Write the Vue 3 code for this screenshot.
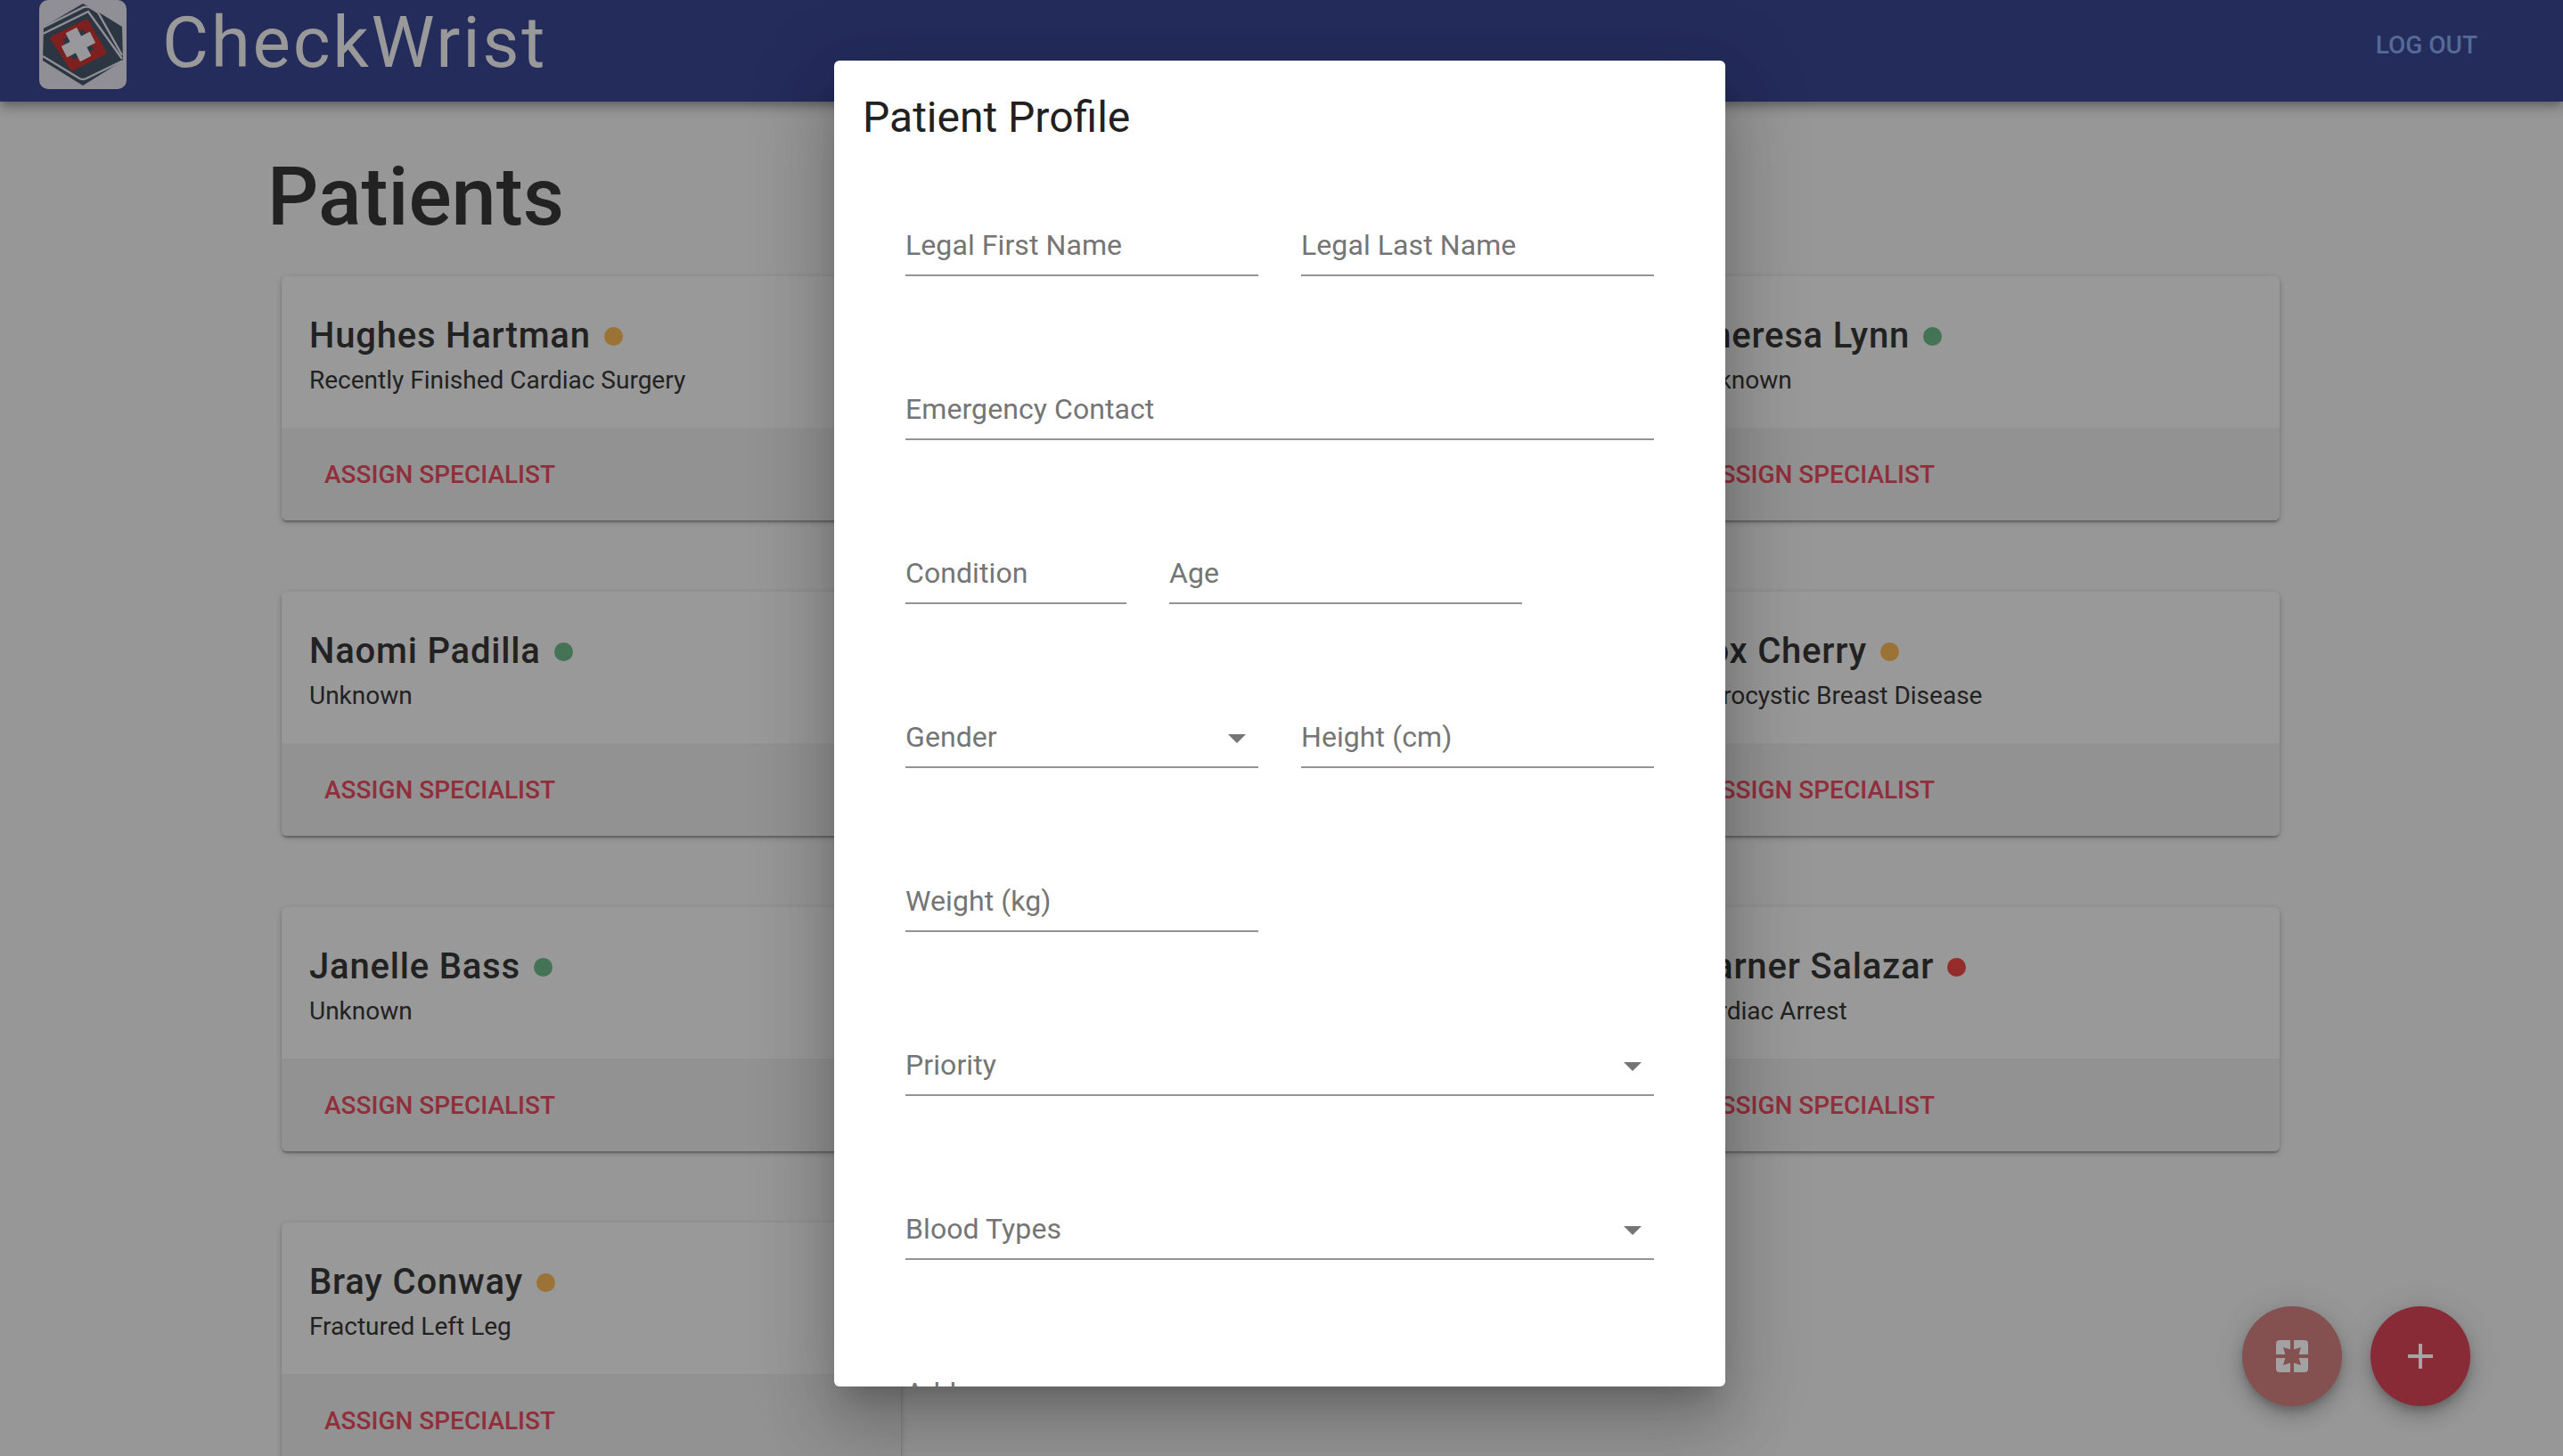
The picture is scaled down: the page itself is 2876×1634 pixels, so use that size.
<script setup>
const leftPatients = [
  { name: 'Hughes Hartman', condition: 'Recently Finished Cardiac Surgery', status: 'amber' },
  { name: 'Naomi Padilla', condition: 'Unknown', status: 'green' },
  { name: 'Janelle Bass', condition: 'Unknown', status: 'green' },
  { name: 'Bray Conway', condition: 'Fractured Left Leg', status: 'amber' },
]
const rightPatients = [
  { name: 'Theresa Lynn', condition: 'Unknown', status: 'green' },
  { name: 'Fox Cherry', condition: 'Fibrocystic Breast Disease', status: 'amber' },
  { name: 'Garner Salazar', condition: 'Cardiac Arrest', status: 'red' },
]
const rows = [
  [{ label: 'Legal First Name' }, { label: 'Legal Last Name' }],
  [{ label: 'Emergency Contact', size: 'full' }],
  [{ label: 'Condition', size: 'short' }, { label: 'Age' }],
  [{ label: 'Gender', select: true }, { label: 'Height (cm)' }],
  [{ label: 'Weight (kg)' }],
  [{ label: 'Priority', size: 'full', select: true }],
  [{ label: 'Blood Types', size: 'full', select: true }],
  [{ label: 'Address', size: 'full' }],
]
</script>

<template>
  <div class="page">
    <header class="appbar">
      <div class="logo">
        <svg width="98" height="100" viewBox="0 0 98 100">
          <path d="M49 4 L64 12 L93 30 L94 68 L49 96 L4 68 L5 30 Z" fill="#2c3642" />
          <path d="M4 31 L50 8 Q54 7 58 9 L66 14 L93 62" fill="none" stroke="#8f8f95" stroke-width="2.4" />
          <path d="M4 38 L55 13 L93 66" fill="none" stroke="#8f8f95" stroke-width="2.4" />
          <path d="M4 63 L45 88 Q49 90 53 88 L94 68" fill="none" stroke="#8f8f95" stroke-width="2.4" />
          <path d="M15 43 L53 24 L73 59 L37 77 Z" fill="#7f2020" stroke="#7f2020" stroke-width="5" stroke-linejoin="round" />
          <g transform="rotate(-27 44 50)">
            <rect x="31" y="37" width="26" height="26" fill="#2c3642" />
            <rect x="37" y="32" width="14" height="36" fill="#98989c" />
            <rect x="26" y="43" width="36" height="14" fill="#98989c" />
          </g>
        </svg>
      </div>
      <div class="brand">CheckWrist</div>
      <div class="logout">LOG OUT</div>
    </header>

    <main class="content">
      <h1 class="heading">Patients</h1>
      <div class="columns">
        <div class="column">
          <article v-for="p in leftPatients" :key="p.name" class="card">
            <div class="card-head">
              <div class="name">{{ p.name }}<span class="dot" :class="p.status"></span></div>
              <div class="cond">{{ p.condition }}</div>
            </div>
            <div class="card-foot">ASSIGN SPECIALIST</div>
          </article>
        </div>
        <div class="column"></div>
        <div class="column">
          <article v-for="p in rightPatients" :key="p.name" class="card">
            <div class="card-head">
              <div class="name">{{ p.name }}<span class="dot" :class="p.status"></span></div>
              <div class="cond">{{ p.condition }}</div>
            </div>
            <div class="card-foot">ASSIGN SPECIALIST</div>
          </article>
        </div>
      </div>
    </main>

    <div class="fabs">
      <button class="fab soft">
        <svg width="36" height="36" viewBox="0 0 36 36">
          <rect width="36" height="36" rx="4" fill="#a2a2a2" />
          <path d="M8 8 L18 11 L28 8 L25 18 L28 28 L18 25 L8 28 L11 18 Z" fill="#845050" />
          <path d="M16 0 H20 V36 H16 Z M0 16 H36 V20 H0 Z" fill="#845050" />
        </svg>
      </button>
      <button class="fab strong">
        <svg width="28" height="28" viewBox="0 0 28 28">
          <path d="M12 0 H16 V12 H28 V16 H16 V28 H12 V16 H0 V12 H12 Z" fill="#a5a5a5" />
        </svg>
      </button>
    </div>

    <section class="dialog">
      <h2 class="dialog-title">Patient Profile</h2>
      <div class="form">
        <div v-for="(row, i) in rows" :key="i" class="row">
          <div v-for="f in row" :key="f.label" class="field" :class="f.size">
            <span>{{ f.label }}</span>
            <i v-if="f.select" class="arrow"></i>
          </div>
        </div>
      </div>
    </section>
  </div>
</template>

<style>
html, body { margin: 0; padding: 0; background: #979797; }
</style>

<style scoped>
.page {
  position: relative;
  width: 2876px;
  height: 1634px;
  overflow: hidden;
  background: #979797;
  font-family: Roboto, "Liberation Sans", sans-serif;
}
.appbar {
  height: 114px;
  box-sizing: border-box;
  display: flex;
  align-items: flex-start;
  padding: 0 96px 0 44px;
  background: #242c5c;
  box-shadow: 0 4px 8px -2px rgba(0, 0, 0, .2), 0 8px 10px rgba(0, 0, 0, .14), 0 2px 20px rgba(0, 0, 0, .12);
  position: relative;
}
.logo {
  width: 98px;
  height: 100px;
  border-radius: 10px;
  background: #8f8f95;
}
.logo svg { display: block; }
.brand {
  margin-left: 40px;
  font-size: 80px;
  line-height: 96px;
  color: #999;
  letter-spacing: 2.7px;
}
.logout {
  margin-left: auto;
  font-size: 28px;
  line-height: 102px;
  font-weight: 500;
  color: #556a97;
}
.content { padding: 0 0 0 316px; }
.heading {
  margin: 54px 0 34px -16px;
  font-size: 90px;
  line-height: 108px;
  font-weight: 500;
  color: #222;
}
.columns {
  display: grid;
  grid-template-columns: 695px 695px 694px;
  column-gap: 79px;
}
.column { display: flex; flex-direction: column; gap: 80px; }
.card {
  height: 274px;
  background: #999;
  border-radius: 6px;
  box-shadow: 0 2px 6px rgba(0, 0, 0, .2), 0 2px 2px rgba(0, 0, 0, .14), 0 4px 2px -2px rgba(0, 0, 0, .12);
  overflow: hidden;
}
.card-head { height: 170px; box-sizing: border-box; padding: 41px 31px 0; }
.name {
  display: flex;
  align-items: center;
  font-size: 40px;
  line-height: 52px;
  font-weight: 500;
  letter-spacing: .8px;
  color: #222;
}
.dot { width: 21px; height: 21px; border-radius: 50%; margin-left: 15px; }
.dot.amber { background: #9c7336; }
.dot.green { background: #447455; }
.dot.red { background: #962c2a; }
.cond {
  margin-top: 4px;
  font-size: 28px;
  line-height: 40px;
  color: #222;
  letter-spacing: 0;
}
.card-foot {
  height: 104px;
  box-sizing: border-box;
  padding: 33px 48px 0;
  background: #929292;
  font-size: 28px;
  line-height: 40px;
  font-weight: 500;
  color: #902f3b;
}
.fabs {
  position: absolute;
  left: 2516px;
  top: 1466px;
  display: flex;
  gap: 32px;
}
.fab {
  width: 112px;
  height: 112px;
  padding: 0;
  border: 0;
  border-radius: 50%;
  display: flex;
  align-items: center;
  justify-content: center;
  box-shadow: 0 6px 10px -2px rgba(0, 0, 0, .2), 0 12px 20px rgba(0, 0, 0, .14), 0 2px 36px rgba(0, 0, 0, .12);
}
.fab.soft { background: #845050; }
.fab.strong { background: #882b36; }
.dialog {
  position: absolute;
  left: 936px;
  top: 68px;
  width: 1000px;
  height: 1488px;
  overflow: hidden;
  background: #fff;
  border-radius: 6px;
  box-shadow: 0 22px 30px -14px rgba(0, 0, 0, .2), 0 48px 76px 6px rgba(0, 0, 0, .14), 0 18px 92px 16px rgba(0, 0, 0, .12);
}
.dialog-title {
  margin: 0;
  padding: 27px 32px 0;
  font-size: 48px;
  line-height: 74px;
  font-weight: 400;
  color: #212121;
}
.form {
  padding: 77px 80px 0;
  display: flex;
  flex-direction: column;
  gap: 120px;
}
.row { display: flex; gap: 48px; }
.field {
  position: relative;
  width: 396px;
  height: 64px;
  box-sizing: border-box;
  border-bottom: 2px solid #949494;
  font-size: 32px;
  line-height: 48px;
  color: #757575;
  padding-top: 5px;
  letter-spacing: .08px;
}
.field.full { width: 840px; }
.field.short { width: 248px; }
.arrow {
  position: absolute;
  right: 14px;
  top: 26px;
  width: 0;
  height: 0;
  border-left: 10px solid transparent;
  border-right: 10px solid transparent;
  border-top: 10px solid #757575;
}
</style>
